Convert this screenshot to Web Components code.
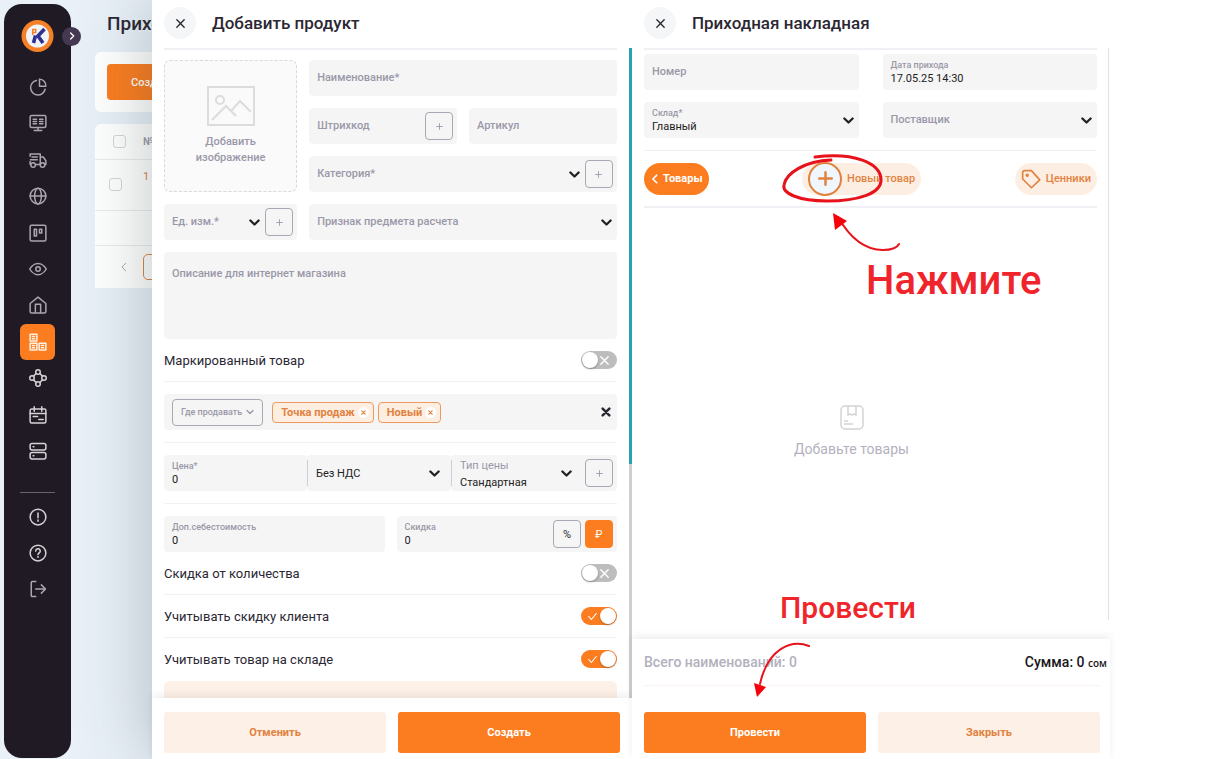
<!DOCTYPE html>
<html lang="ru">
<head>
<meta charset="utf-8">
<meta name="viewport" content="width=device-width, initial-scale=1">
<title>Приходная накладная</title>
<style>
    :root {
        --orange: #fb7d20;
        --orange-dark: #e2823f;
        --peach: #fdf0e6;
        --grey: #f5f5f5;
        --line: #f0f0f5;
        --muted: #9a98a8;
        --ink: #2b2733;
    }
    body {
        margin: 0;
        background: #fff;
        color: var(--ink);
        font-family: Roboto, 'Liberation Sans', sans-serif;
        font-size: 11px;
    }
</style>
</head>
<body>
<stock-app></stock-app>

<script>
const createTemplate = (markup) => {
    const template = document.createElement('template');
    template.innerHTML = markup;
    return template;
};

const BASE = `
    * { box-sizing: border-box; }
    button, input, select, textarea {
        margin: 0;
        padding: 0;
        border: 0;
        border-radius: 0;
        outline: 0;
        background: none;
        color: inherit;
        font: inherit;
    }
    button { cursor: pointer; }
    svg { display: block; flex: none; }
`;

const ICONS = {
    pie: '<path d="M10 3.2A9.8 9.8 0 1 0 21.5 15"/><path d="M14 1.5V11h8.5A9 9 0 0 0 14 1.5z"/>',
    monitor: '<rect x="1.5" y="2" width="21" height="16" rx="2"/><path d="M12 18v4M7 22h10M5.500 7h4.500M5.500 10h4.500M5.500 13h4.500M14 7h4.500M14 10h4.500M14 13h4.500"/>',
    truck: '<path d="M1.500 4H15v14H9M1.500 4v3M4 8h7M2 11.500h9M15 8h4l3.500 5v5h-1.500M1.500 18v-4"/><circle cx="5.500" cy="18.500" r="3"/><circle cx="18" cy="18.500" r="3"/>',
    globe: '<circle cx="12" cy="12" r="10.500"/><ellipse cx="12" cy="12" rx="4.500" ry="10.500"/><path d="M1.500 12h21"/>',
    board: '<rect x="1.500" y="1.500" width="21" height="21" rx="2"/><rect x="7" y="7" width="3" height="9"/><rect x="14" y="7" width="3" height="5"/>',
    eye: '<path d="M1 12s4-7.500 11-7.500S23 12 23 12s-4 7.500-11 7.500S1 12 1 12z"/><circle cx="12" cy="12" r="3"/>',
    home: '<path d="M1.500 10 12 1.500 22.500 10v10.500a2 2 0 0 1-2 2h-17a2 2 0 0 1-2-2z"/><path d="M8.500 22V11h7v11"/>',
    boxes: '<rect x="1.500" y="1.500" width="9" height="9"/><rect x="1.500" y="13.500" width="9" height="9"/><rect x="13.500" y="13.500" width="9" height="9"/><path d="M4.500 4.500h3M4.500 7.500h3M4.500 16.500h3M4.500 19.500h3M16.500 16.500h3M16.500 19.500h3"/>',
    nodes: '<circle cx="12" cy="4" r="3"/><circle cx="4" cy="12" r="3"/><circle cx="20" cy="12" r="3"/><circle cx="12" cy="20" r="3"/><path d="m6 9.500 3.500-3.500M18 9.500 14.500 6M6 14.500 9.500 18M18 14.500 14.500 18"/>',
    calendar: '<rect x="1.500" y="4" width="21" height="18.500" rx="2"/><path d="M1.500 10h21M7 1v6M17 1v6M5.500 14h6M13 18h6"/>',
    server: '<rect x="1.500" y="2" width="21" height="8.500" rx="2.500"/><rect x="1.500" y="14" width="21" height="8.500" rx="2.500"/><path d="M5.500 6.200h1M5.500 18.200h1"/>',
    alert: '<circle cx="12" cy="12" r="10.500"/><path d="M12 6.500v6.500M12 16v1.500"/>',
    help: '<circle cx="12" cy="12" r="10.500"/><path d="M9 9.500a3 3 0 1 1 4.500 2.500c-1 .600-1.500 1-1.500 2M12 16.500v1"/>',
    logout: '<path d="M9 2H4.500A1.500 1.500 0 0 0 3 3.500v17A1.500 1.500 0 0 0 4.500 22H9M9 12h13M16.500 6.500 22 12l-5.500 5.500"/>',
    close: '<path d="m4 4 16 16M20 4 4 20"/>',
    right: '<path d="m8 3 9 9-9 9"/>',
    left: '<path d="m16 3-9 9 9 9"/>',
    down: '<path d="m3 7.500 9 9 9-9"/>',
    plus: '<path d="M12 2v20M2 12h20"/>',
    check: '<path d="m2 12 7 8L22 4"/>',
    tag: '<path d="M2 3.500V12l10.500 10.500L22.500 13 12.500 2H3.500z"/><circle cx="7.500" cy="7.500" r="1.200"/>',
};

const icon = (name, size = 18, width = 2) => `
    <svg width="${size}" height="${size}" viewBox="0 0 24 24" fill="none" stroke="currentColor"
        stroke-width="${width}" stroke-linecap="round" stroke-linejoin="round" aria-hidden="true">${ICONS[name]}</svg>`;


class NavItem extends HTMLElement {
    connectedCallback() {
        this.attachShadow({ mode: 'open' }).innerHTML = `
            <style>
                ${BASE}
                :host { display: block; color: #aaa6ae; }
                :host([bright]) { color: #d5d2d7; }
                a {
                    display: grid;
                    place-items: center;
                    height: 36px;
                    border-radius: 6px;
                    color: inherit;
                }
                :host([active]) a { background: var(--orange); color: #fff2e2; }
            </style>
            <a href="#" aria-label="${this.getAttribute('label')}">${icon(this.getAttribute('icon'))}</a>
        `;
    }
}
customElements.define('nav-item', NavItem);


const sideBarTemplate = createTemplate(`
    <style>
        ${BASE}
        :host {
            display: flex;
            flex-direction: column;
            padding: 16px;
            border-radius: 18px;
            background: #1f1a23;
        }
        header { display: flex; align-items: center; margin-bottom: 17px; }
        .expand {
            display: grid;
            flex: none;
            place-items: center;
            width: 19px;
            height: 19px;
            margin-left: 7px;
            border-radius: 50%;
            background: #453850;
            color: #fff;
        }
        .main {
            display: flex;
            flex-direction: column;
            justify-content: space-between;
            height: 400px;
        }
        .service { margin-top: 23px; padding-top: 6px; border-top: 1px solid #6a6570; }
    </style>
    <header>
        <svg width="35" height="32" viewBox="0 0 35 32" role="img" aria-label="Логотип">
            <circle cx="17.500" cy="16" r="16" fill="#f58026"/>
            <circle cx="17.500" cy="16" r="11.500" fill="#f2f4fb"/>
            <path d="M15.500 15.500 13.500 23M24.500 9 18 16l5 7" fill="none" stroke="#2d3192" stroke-width="3.600"/>
            <path d="M12.700 15V9.500h3v3h-3" fill="none" stroke="#f58026" stroke-width="1.500"/>
        </svg>
        <button class="expand" type="button" aria-label="Развернуть меню">${icon('right', 8, 4)}</button>
    </header>
    <nav class="main" aria-label="Разделы">
        <nav-item icon="pie" label="Аналитика"></nav-item>
        <nav-item icon="monitor" label="Касса"></nav-item>
        <nav-item icon="truck" label="Доставка"></nav-item>
        <nav-item icon="globe" label="Сайт"></nav-item>
        <nav-item icon="board" label="Задачи"></nav-item>
        <nav-item icon="eye" label="Просмотр"></nav-item>
        <nav-item icon="home" label="Главная"></nav-item>
        <nav-item icon="boxes" label="Склад" active></nav-item>
        <nav-item icon="nodes" label="Связи" bright></nav-item>
        <nav-item icon="calendar" label="Календарь" bright></nav-item>
        <nav-item icon="server" label="Хранилище" bright></nav-item>
    </nav>
    <nav class="service" aria-label="Сервис">
        <nav-item icon="alert" label="Уведомления" bright></nav-item>
        <nav-item icon="help" label="Помощь" bright></nav-item>
        <nav-item icon="logout" label="Выход"></nav-item>
    </nav>
`);

class SideBar extends HTMLElement {
    constructor() {
        super();
        this.attachShadow({ mode: 'open' }).appendChild(sideBarTemplate.content.cloneNode(true));
    }
}
customElements.define('side-bar', SideBar);


const documentListTemplate = createTemplate(`
    <style>
        ${BASE}
        :host { display: block; white-space: nowrap; }
        h1 { margin: 0; padding: 12px; font-size: 19px; font-weight: 500; line-height: 24px; }
        .toolbar { margin: 4px 0 12px; padding: 12px; border-radius: 6px; background: #fff; }
        .create {
            height: 36px;
            padding: 0 24px;
            border-radius: 4px;
            background: var(--orange);
            color: #fff;
            font-weight: 500;
        }
        .card { border-radius: 6px 6px 0 0; background: #fff; }
        table { width: 100%; border-collapse: collapse; }
        th, td { height: 35px; padding: 0; border-bottom: 1px solid #e8ebf0; color: var(--muted); text-align: left; }
        th { font-weight: 500; }
        tr.doc td { height: 51px; padding-bottom: 16px; }
        th:first-child, tr.doc td:first-child { width: 48px; padding: 0; text-align: center; }
        tr.doc td:first-child { padding-right: 8px; }
        td a { color: var(--orange-dark); text-decoration: none; }
        input {
            display: inline-block;
            width: 13px;
            height: 13px;
            border: 1px solid #d5d5d8;
            border-radius: 3px;
            appearance: none;
            vertical-align: middle;
        }
        .pages { display: flex; align-items: center; height: 42px; padding-left: 24px; gap: 14px; }
        .pages button { color: #999; }
        .pages .current {
            width: 26px;
            height: 26px;
            border: 1px solid var(--orange-dark);
            border-radius: 5px;
        }
    </style>
    <h1>Приходные</h1>
    <div class="toolbar"><button class="create" type="button">Создать</button></div>
    <div class="card">
        <table>
            <tr><th><input type="checkbox" aria-label="Выбрать все"></th><th>№</th></tr>
            <tr class="doc"><td><input type="checkbox" aria-label="Выбрать накладную 1"></td><td><a href="#">1</a></td></tr>
            <tr><td colspan="2"></td></tr>
        </table>
        <div class="pages">
            <button type="button" aria-label="Назад">${icon('left', 10)}</button>
            <button class="current" type="button" aria-label="Первая страница"></button>
        </div>
    </div>
`);

class DocumentList extends HTMLElement {
    constructor() {
        super();
        this.attachShadow({ mode: 'open' }).appendChild(documentListTemplate.content.cloneNode(true));
    }
}
customElements.define('document-list', DocumentList);


class SideDrawer extends HTMLElement {
    connectedCallback() {
        this.attachShadow({ mode: 'open' }).innerHTML = `
            <style>
                ${BASE}
                :host {
                    display: flex;
                    flex-direction: column;
                    min-width: 0;
                    height: 100vh;
                    background: #fff;
                    isolation: isolate;
                }
                header { display: flex; align-items: center; gap: 16px; height: 48px; padding: 0 12px 2px; }
                header button {
                    display: grid;
                    place-items: center;
                    width: 32px;
                    height: 32px;
                    border-radius: 50%;
                    background: #f5f6f8;
                }
                h2 { margin: 0; font-size: 17px; font-weight: 500; line-height: 24px; }
                .body { display: flex; flex: 1; min-height: 0; padding-left: 12px; gap: 12px; }
                .content {
                    display: flex;
                    flex: 1;
                    flex-direction: column;
                    min-width: 0;
                    overflow: hidden;
                    border-top: 2px solid var(--line);
                }
                .scroll { width: 3px; background: linear-gradient(#26a5b0 64%, #cfcfcf 64%); }
                :host([plain]) .scroll { width: 1px; margin: 0 1px 19px 0; background: #e2e2e4; }
                :host([plain]) .body { gap: 11px; }
                footer { z-index: 1; background: #fff; box-shadow: 0 -3px 8px rgba(0, 0, 0, 0.07); }
                .actions {
                    display: grid;
                    grid-template-columns: 1fr 1fr;
                    gap: 12px;
                    padding: 14px 12px 6px;
                }
                :host([plain]) .actions { padding-right: 10px; }
            </style>
            <header>
                <button type="button" aria-label="Закрыть панель">${icon('close', 11, 3)}</button>
                <h2>${this.getAttribute('heading')}</h2>
            </header>
            <div class="body">
                <div class="content"><slot></slot></div>
                <div class="scroll"></div>
            </div>
            <footer>
                <slot name="summary"></slot>
                <div class="actions"><slot name="action"></slot></div>
            </footer>
        `;
    }
}
customElements.define('side-drawer', SideDrawer);


class ActionButton extends HTMLElement {
    connectedCallback() {
        this.attachShadow({ mode: 'open' }).innerHTML = `
            <style>
                ${BASE}
                :host { display: block; }
                button {
                    width: 100%;
                    height: 41px;
                    border-radius: 3px;
                    background: var(--peach);
                    color: var(--orange-dark);
                    font-weight: 700;
                }
                :host([primary]) button { background: var(--orange); color: #fff; }
            </style>
            <button type="button"><slot></slot></button>
        `;
    }
}
customElements.define('action-button', ActionButton);


// square 28px button that sits inside a field
class SquareButton extends HTMLElement {
    connectedCallback() {
        this.attachShadow({ mode: 'open' }).innerHTML = `
            <style>
                ${BASE}
                :host { display: block; flex: none; }
                button {
                    display: grid;
                    place-items: center;
                    width: 28px;
                    height: 28px;
                    border: 1px solid #a9a7b5;
                    border-radius: 4px;
                    color: var(--muted);
                }
                :host([dark]) button { color: var(--ink); }
                :host([filled]) button { border-color: var(--orange); background: var(--orange); color: #fff; }
            </style>
            <button type="button" aria-label="${this.getAttribute('label')}"><slot>${icon('plus', 7, 3)}</slot></button>
        `;
    }
}
customElements.define('square-button', SquareButton);


class FormField extends HTMLElement {
    connectedCallback() {
        const label = this.getAttribute('label') || '';
        const value = this.getAttribute('value') || '';
        const kind = this.getAttribute('kind') || 'input';
        this.attachShadow({ mode: 'open' }).innerHTML = `
            <style>
                ${BASE}
                :host {
                    display: flex;
                    align-items: center;
                    gap: 4px;
                    min-width: 0;
                    min-height: 36px;
                    border-radius: 4px;
                    background: var(--grey);
                }
                :host([divided])::before { content: ''; width: 1px; height: 26px; margin-right: -4px; background: #cfced6; }
                .box { display: grid; flex: 1; align-self: stretch; grid-template-columns: minmax(0, 1fr) auto; min-width: 0; }
                label {
                    z-index: 1;
                    grid-area: 1 / 1;
                    align-self: center;
                    padding-left: 8px;
                    overflow: hidden;
                    color: var(--muted);
                    font-weight: 500;
                    line-height: 16px;
                    white-space: nowrap;
                    pointer-events: none;
                }
                .control { grid-area: 1 / 1 / 2 / 3; width: 100%; padding: 0 8px; appearance: none; color: #222; }
                textarea { resize: none; }
                svg {
                    z-index: 1;
                    grid-area: 1 / 2;
                    align-self: center;
                    margin-right: var(--chevron-gap, 5px);
                    color: #222;
                    pointer-events: none;
                }
                .filled label { align-self: start; padding-top: 5px; font-size: 9px; line-height: 12px; }
                .filled.named .control { padding-top: 12px; }
                :host([roomy]) .filled label { padding-top: 2px; font-size: 11px; font-weight: 400; line-height: 17px; }
                :host([roomy]) .filled.named .control { padding-top: 18px; }
                .textarea label { align-self: start; padding-top: 14px; }
            </style>
            <div class="box ${kind} ${value ? 'filled' : ''} ${label ? 'named' : ''}">
                ${label ? `<label for="control">${label}</label>` : ''}
                ${this._control(kind, value)}
                ${kind === 'select' ? icon('down', 11, 5) : ''}
            </div>
            <slot></slot>
        `;
    }

    _control(kind, value) {
        const name = this.hasAttribute('hint') ? `aria-label="${this.getAttribute('hint')}"` : '';
        if (kind === 'select') {
            return `<select id="control" class="control" ${name}><option>${value}</option></select>`;
        }
        if (kind === 'textarea') {
            return '<textarea id="control" class="control"></textarea>';
        }
        return `<input id="control" class="control" type="text" value="${value}">`;
    }
}
customElements.define('form-field', FormField);


class ToggleRow extends HTMLElement {
    connectedCallback() {
        const on = this.hasAttribute('on');
        this.attachShadow({ mode: 'open' }).innerHTML = `
            <style>
                ${BASE}
                :host { display: block; flex: none; border-bottom: 1px solid var(--line); }
                :host([last]) { border-color: transparent; }
                label { display: flex; align-items: center; justify-content: space-between; height: 42px; font-size: 13px; }
                .switch { display: grid; align-items: center; color: #fff; }
                input {
                    display: flex;
                    grid-area: 1 / 1;
                    width: 36px;
                    height: 18px;
                    padding: 1px;
                    border-radius: 9px;
                    appearance: none;
                    background: #bdbdbd;
                }
                input::before {
                    content: '';
                    width: 16px;
                    height: 16px;
                    border-radius: 50%;
                    background: #fff;
                    box-shadow: 0 1px 2px rgba(0, 0, 0, 0.3);
                }
                input:checked { justify-content: flex-end; background: var(--orange); }
                svg { z-index: 1; grid-area: 1 / 1; justify-self: end; margin: 0 7px; pointer-events: none; }
                input:checked + svg { justify-self: start; }
            </style>
            <label>
                <slot></slot>
                <span class="switch">
                    <input type="checkbox" ${on ? 'checked' : ''}>
                    ${on ? icon('check', 9, 3) : icon('close', 11, 3)}
                </span>
            </label>
        `;
    }
}
customElements.define('toggle-row', ToggleRow);


class TagChip extends HTMLElement {
    connectedCallback() {
        this.attachShadow({ mode: 'open' }).innerHTML = `
            <style>
                ${BASE}
                :host {
                    display: flex;
                    align-items: center;
                    gap: 3px;
                    height: 21px;
                    padding: 0 4px 0 8px;
                    border: 1px solid #ee9a5f;
                    border-radius: 4px;
                    background: #fdeee2;
                    color: var(--orange-dark);
                    font-weight: 700;
                    white-space: nowrap;
                }
                button { display: grid; place-items: center; width: 11px; height: 11px; border-radius: 50%; background: #fff; }
            </style>
            <slot></slot>
            <button type="button" aria-label="Убрать">${icon('close', 5, 6)}</button>
        `;
    }
}
customElements.define('tag-chip', TagChip);


class PillButton extends HTMLElement {
    connectedCallback() {
        this.attachShadow({ mode: 'open' }).innerHTML = `
            <style>
                ${BASE}
                :host { display: block; }
                button {
                    display: flex;
                    align-items: center;
                    gap: 5px;
                    height: 32px;
                    padding: 0 6px;
                    border-radius: 16px;
                    background: #fdeee3;
                    color: var(--orange-dark);
                    font-weight: 500;
                    white-space: nowrap;
                }
                :host([primary]) button { gap: 3px; background: var(--orange); color: #fff; font-weight: 700; }
                .ring {
                    display: grid;
                    place-items: center;
                    width: 34px;
                    height: 34px;
                    border: 2px solid var(--orange-dark);
                    border-radius: 50%;
                    background: #eff6fc;
                }
            </style>
            <button type="button"><slot name="icon">${this._icon()}</slot><slot></slot></button>
        `;
    }

    _icon() {
        const name = this.getAttribute('icon');
        if (name === 'plus') {
            return `<span class="ring">${icon('plus', 15, 4)}</span>`;
        }
        return name === 'left' ? icon(name, 10, 4) : icon(name, 20, 2);
    }
}
customElements.define('pill-button', PillButton);


const productDrawerTemplate = createTemplate(`
    <style>
        ${BASE}
        :host { display: block; min-width: 0; }
        .grid {
            display: grid;
            grid-template-columns: 9fr 10fr 10fr;
            gap: 12px;
            padding-top: 10px;
        }
        .photo {
            display: flex;
            grid-row: span 3;
            flex-direction: column;
            align-items: center;
            justify-content: center;
            gap: 8px;
            border: 1px dashed #d9d9d9;
            border-radius: 6px;
            background: #fafafa;
            color: var(--muted);
            font-weight: 500;
            line-height: 16px;
        }
        .wide { grid-column: span 2; }
        .full { grid-column: 1 / -1; min-height: 87px; }
        .row { display: grid; flex: none; padding: 12px 0; border-bottom: 1px solid var(--line); }
        .sell {
            display: flex;
            align-items: center;
            height: 36px;
            padding: 0 6px 0 8px;
            border-radius: 4px;
            background: var(--grey);
            gap: 4px;
        }
        .where {
            display: flex;
            align-items: center;
            justify-content: center;
            height: 27px;
            margin-right: 5px;
            padding: 0 8px;
            gap: 4px;
            border: 1px solid #a9a7b5;
            border-radius: 4px;
            color: var(--muted);
            font-size: 9px;
            font-weight: 500;
        }
        .clear { margin-left: auto; }
        .price { grid-template-columns: 143fr 144fr 166fr; }
        .cost { grid-template-columns: 1fr 1fr; gap: 12px; padding-bottom: 0; border: 0; }
        .more { flex: none; height: 40px; border-radius: 6px; background: var(--peach); }
        form-field:has(square-button) { --chevron-gap: 1px; padding-right: 4px; }
        form-field.vat { padding-right: 6px; }
        form-field.type { --chevron-gap: 9px; }
    </style>
    <side-drawer heading="Добавить продукт">
        <div class="grid">
            <button class="photo" type="button">
                <svg width="48" height="40" viewBox="0 0 48 40" fill="none" stroke="#dcdcdc" stroke-width="2" aria-hidden="true">
                    <rect x="1" y="1" width="46" height="38"/>
                    <circle cx="13" cy="14" r="4"/>
                    <path d="m5 34 14-14 10 10M24 25l9-10 11 11"/>
                </svg>
                <span>Добавить<br>изображение</span>
            </button>
            <form-field class="wide" label="Наименование*"></form-field>
            <form-field label="Штрихкод"><square-button label="Создать штрихкод"></square-button></form-field>
            <form-field label="Артикул"></form-field>
            <form-field class="wide" kind="select" label="Категория*"><square-button label="Добавить категорию"></square-button></form-field>
            <form-field kind="select" label="Ед. изм.*"><square-button label="Добавить единицу"></square-button></form-field>
            <form-field class="wide" kind="select" label="Признак предмета расчета"></form-field>
            <form-field class="full" kind="textarea" label="Описание для интернет магазина"></form-field>
        </div>
        <toggle-row>Маркированный товар</toggle-row>
        <div class="row">
            <div class="sell">
                <button class="where" type="button">Где продавать ${icon('down', 8, 4)}</button>
                <tag-chip>Точка продаж</tag-chip>
                <tag-chip>Новый</tag-chip>
                <button class="clear" type="button" aria-label="Очистить">${icon('close', 10, 6)}</button>
            </div>
        </div>
        <div class="row price">
            <form-field label="Цена*" value="0"></form-field>
            <form-field class="vat" kind="select" hint="НДС" value="Без НДС" divided></form-field>
            <form-field class="type" kind="select" label="Тип цены" value="Стандартная" divided roomy><square-button label="Добавить тип цены"></square-button></form-field>
        </div>
        <div class="row cost">
            <form-field label="Доп.себестоимость" value="0"></form-field>
            <form-field label="Скидка" value="0">
                <square-button label="Проценты" dark>%</square-button>
                <square-button label="Рубли" filled>₽</square-button>
            </form-field>
        </div>
        <toggle-row>Скидка от количества</toggle-row>
        <toggle-row on>Учитывать скидку клиента</toggle-row>
        <toggle-row on last>Учитывать товар на складе</toggle-row>
        <div class="more"></div>
        <action-button slot="action">Отменить</action-button>
        <action-button slot="action" primary>Создать</action-button>
    </side-drawer>
`);

class ProductDrawer extends HTMLElement {
    constructor() {
        super();
        this.attachShadow({ mode: 'open' }).appendChild(productDrawerTemplate.content.cloneNode(true));
    }
}
customElements.define('product-drawer', ProductDrawer);


const invoiceDrawerTemplate = createTemplate(`
    <style>
        ${BASE}
        :host { display: block; position: relative; min-width: 0; }
        .fields {
            display: grid;
            grid-template-columns: 1fr 1fr;
            gap: 12px 24px;
            padding: 4px 0 12px;
        }
        .tabs {
            display: flex;
            align-items: center;
            justify-content: space-between;
            height: 58px;
            border: solid var(--line);
            border-width: 1px 0 2px;
        }
        .empty {
            display: flex;
            flex: 1;
            flex-direction: column;
            align-items: center;
            justify-content: center;
            gap: 9px;
            padding: 16px 38px 0 0;
            color: #b3b1be;
            font-size: 14px;
            line-height: 20px;
        }
        .summary {
            display: flex;
            align-items: center;
            justify-content: space-between;
            height: 46px;
            padding: 0 3px 0 12px;
            color: #b3b1be;
            font-size: 14px;
            font-weight: 500;
        }
        .summary b { color: #1b1720; font-weight: 500; }
        .summary small { font: 600 10px 'Open Sans', sans-serif; }
        .rule { height: 1px; margin: 0 10px 12px 12px; background: #fbf4f2; }
        .mark { position: absolute; fill: none; stroke: #e8121b; stroke-width: 3; stroke-linecap: round; overflow: visible; pointer-events: none; }
        .mark .head { fill: #f5000b; stroke: none; }
        .mark .thin { stroke-width: 2; }
        .press { top: 150px; left: 150px; }
        .post { top: 640px; left: 120px; }
        .note { position: absolute; margin: 0; color: #f0252b; font-weight: 500; white-space: nowrap; pointer-events: none; }
        .note.first { top: 256px; left: 234px; font-size: 40px; line-height: 50px; }
        .note.second { top: 588px; left: 148px; font-size: 30px; line-height: 40px; }
    </style>
    <side-drawer heading="Приходная накладная" plain>
        <div class="fields">
            <form-field label="Номер"></form-field>
            <form-field label="Дата прихода" value="17.05.25 14:30"></form-field>
            <form-field kind="select" label="Склад*" value="Главный"></form-field>
            <form-field kind="select" label="Поставщик"></form-field>
        </div>
        <div class="tabs">
            <pill-button icon="left" primary>Товары</pill-button>
            <pill-button icon="plus">Новый товар</pill-button>
            <pill-button icon="tag">Ценники</pill-button>
        </div>
        <div class="empty">
            <svg width="24" height="25" viewBox="0 0 24 25" fill="none" stroke="#d3d3d5" stroke-width="1.500" aria-hidden="true">
                <rect x="1" y="1" width="22" height="23" rx="4"/>
                <path d="M8 1v9l2-1 2 1 2-1 2 1V1M4 16h4M4 19h9"/>
            </svg>
            <span>Добавьте товары</span>
        </div>
        <div slot="summary">
            <div class="summary"><span>Всего наименований: 0</span><b>Сумма: 0 <small>сом</small></b></div>
            <div class="rule"></div>
        </div>
        <action-button slot="action" primary>Провести</action-button>
        <action-button slot="action">Закрыть</action-button>
    </side-drawer>
    <svg class="mark press" width="120" height="102" aria-hidden="true">
        <path d="M33 7C72 2 98 13 99 29c1 15-24 22-54 22C16 51 0 43 2 35c2-12 21-24 47-25"/>
        <path class="thin" d="M56 67c12 21 27 33 45 33 9 0 14-2 16-6"/>
        <path class="head" d="m51 63 14 8-12 9z"/>
    </svg>
    <svg class="mark post" width="60" height="60" aria-hidden="true">
        <path class="thin" d="M57 6C40-1 16 8 8 44"/>
        <path class="head" d="m2 43 12 4-9 10z"/>
    </svg>
    <p class="note first">Нажмите</p>
    <p class="note second">Провести</p>
`);

class InvoiceDrawer extends HTMLElement {
    constructor() {
        super();
        this.attachShadow({ mode: 'open' }).appendChild(invoiceDrawerTemplate.content.cloneNode(true));
    }
}
customElements.define('invoice-drawer', InvoiceDrawer);


const appTemplate = createTemplate(`
    <style>
        :host {
            display: grid;
            grid-template-columns: 152px minmax(0, 480fr) minmax(0, 478fr) 98px;
            height: 100vh;
            overflow: hidden;
        }
        .page {
            display: grid;
            grid-area: 1 / 1 / 2 / 4;
            grid-template-columns: 67px minmax(0, 1fr);
            gap: 24px;
            padding: 4px 4px 1px;
            background: #e9f0f8;
        }
        document-list { margin-top: -4px; }
        product-drawer { z-index: 1; grid-area: 1 / 2; box-shadow: 0 0 70px rgba(40, 60, 60, 0.3); }
        invoice-drawer { z-index: 1; grid-area: 1 / 3; background: #fff; }
        side-bar { z-index: 2; }
    </style>
    <div class="page">
        <side-bar></side-bar>
        <document-list></document-list>
    </div>
    <product-drawer></product-drawer>
    <invoice-drawer></invoice-drawer>
    <div class="rest"></div>
`);

class StockApp extends HTMLElement {
    constructor() {
        super();
        this.attachShadow({ mode: 'open' }).appendChild(appTemplate.content.cloneNode(true));
    }
}
customElements.define('stock-app', StockApp);
</script>
</body>
</html>
